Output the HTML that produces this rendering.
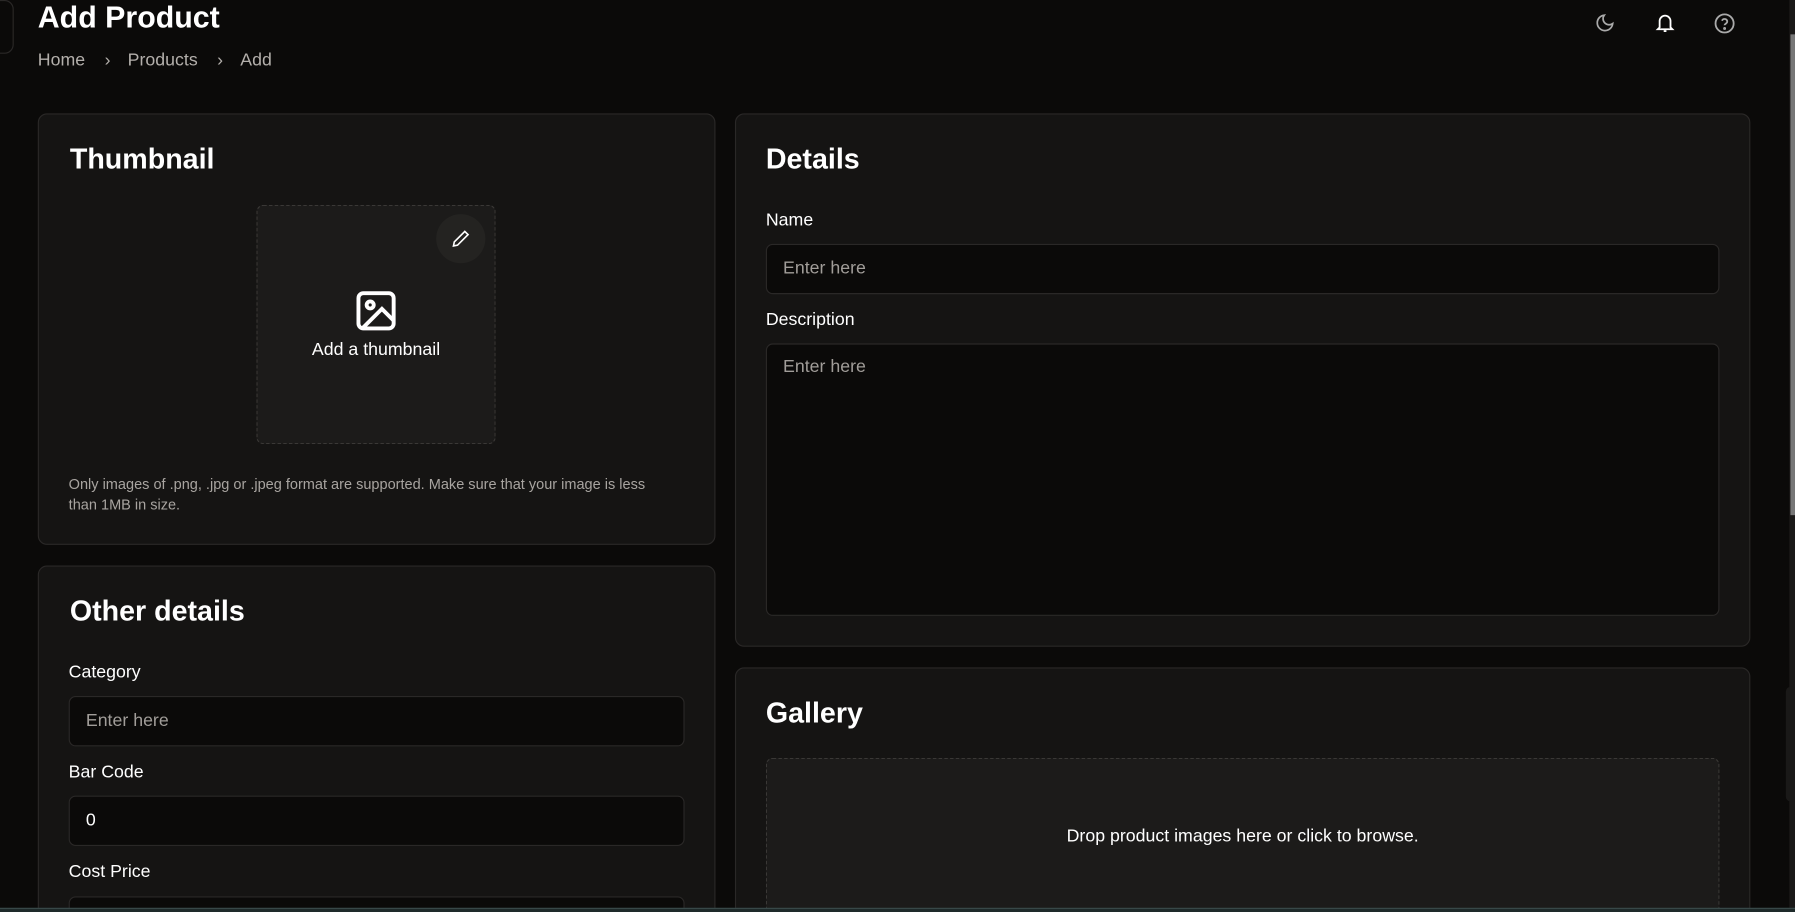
<!DOCTYPE html>
<html><head><meta charset="utf-8"><style>
html,body{margin:0;padding:0;width:1795px;height:912px;overflow:hidden;background:#0b0a09;}
#w{position:absolute;left:0;top:0;width:1568px;height:797px;overflow:hidden;transform:scale(1.14477);transform-origin:0 0;font-family:"Liberation Sans",sans-serif;color:#fff;background:#0b0a09;}
.a{position:absolute;}
.card{position:absolute;background:#151413;border:1px solid #2a2827;border-radius:8px;box-sizing:border-box;}
.h{position:absolute;font-weight:bold;font-size:25px;line-height:30px;}
.lbl{position:absolute;font-size:15.5px;line-height:18px;}
.inp{position:absolute;background:#0b0a09;border:1px solid #2a2827;border-radius:6px;box-sizing:border-box;color:#a19d99;font-size:15.5px;padding-left:14px;}
</style></head><body><div id="w">
<div class="a" style="left:-8px;top:0;width:18px;height:45px;border:1px solid #2a2827;border-radius:8px;"></div>
<div class="h" style="left:33px;top:0px;font-size:26.5px;">Add Product</div>
<div class="a" style="left:33px;top:44px;font-size:15.5px;color:#b3afab;line-height:18px;">Home<span style="margin:0 15px 0 17px">›</span>Products<span style="margin:0 15px 0 17px">›</span>Add</div>
<svg class="a" style="left:1393px;top:11px" width="18" height="18" viewBox="0 0 24 24" fill="none" stroke="#aaa" stroke-width="2"><path d="M21 12.8A9 9 0 1 1 11.2 3a7 7 0 0 0 9.8 9.8z"/></svg>
<svg class="a" style="left:1445px;top:10px" width="19" height="20" viewBox="0 0 24 24" fill="none" stroke="#fff" stroke-width="2"><path d="M6 17V10a6 6 0 0 1 12 0v7l2 2H4z"/><path d="M10.5 21h3"/></svg>
<svg class="a" style="left:1497px;top:11px" width="19" height="19" viewBox="0 0 24 24" fill="none" stroke="#aaa" stroke-width="2"><circle cx="12" cy="12" r="10"/><path d="M9.1 9a3 3 0 0 1 5.8 1c0 2-3 2.5-3 4"/><circle cx="12" cy="17.5" r=".6" fill="#aaa"/></svg>
<div class="a" style="left:1563px;top:0;width:5px;height:797px;background:#1a1918"></div>
<div class="a" style="left:1564px;top:30px;width:4px;height:420px;background:#777"></div>

<div class="card" style="left:33px;top:99px;width:592px;height:377px;"></div>
<div class="h" style="left:61px;top:124px;">Thumbnail</div>
<div class="a" style="left:224px;top:179px;width:209px;height:209px;background:#1c1b1a;border:1px dashed #3a3836;border-radius:6px;box-sizing:border-box;"></div>
<div class="a" style="left:381px;top:187px;width:43px;height:43px;border-radius:50%;background:#242321;"></div>
<svg class="a" style="left:394px;top:200px" width="17" height="17" viewBox="0 0 24 24" fill="none" stroke="#fff" stroke-width="2"><path d="M17 3l4 4L8 20l-5 1 1-5z"/></svg>
<svg class="a" style="left:308px;top:251px" width="41" height="41" viewBox="0 0 24 24" fill="none" stroke="#fff" stroke-width="2"><rect x="3" y="3" width="18" height="18" rx="2.5"/><circle cx="9" cy="9" r="1.8"/><path d="M5 21l10-10 6 6"/></svg>
<div class="a" style="left:224px;top:297px;width:209px;text-align:center;font-size:15.5px;">Add a thumbnail</div>
<div class="a" style="left:60px;top:415px;width:525px;font-size:12.7px;line-height:17.5px;color:#a8a4a0;">Only images of .png, .jpg or .jpeg format are supported. Make sure that your image is less than 1MB in size.</div>

<div class="card" style="left:33px;top:494px;width:592px;height:320px;"></div>
<div class="h" style="left:61px;top:519px;">Other details</div>
<div class="lbl" style="left:60px;top:579px;">Category</div>
<div class="inp" style="left:60px;top:608px;width:538px;height:44px;line-height:42px;">Enter here</div>
<div class="lbl" style="left:60px;top:666px;">Bar Code</div>
<div class="inp" style="left:60px;top:695px;width:538px;height:44px;line-height:42px;color:#fff">0</div>
<div class="lbl" style="left:60px;top:753px;">Cost Price</div>
<div class="inp" style="left:60px;top:783px;width:538px;height:44px;"></div>

<div class="card" style="left:642px;top:99px;width:887px;height:466px;"></div>
<div class="h" style="left:669px;top:124px;">Details</div>
<div class="lbl" style="left:669px;top:184px;">Name</div>
<div class="inp" style="left:669px;top:213px;width:833px;height:44px;line-height:42px;">Enter here</div>
<div class="lbl" style="left:669px;top:271px;">Description</div>
<div class="inp" style="left:669px;top:300px;width:833px;height:238px;padding-top:11px;line-height:18px;">Enter here</div>

<div class="card" style="left:642px;top:583px;width:887px;height:260px;"></div>
<div class="h" style="left:669px;top:608px;">Gallery</div>
<div class="a" style="left:669px;top:662px;width:833px;height:200px;background:#1c1b1a;border:1px dashed #3a3836;border-radius:6px;box-sizing:border-box;"></div>
<div class="a" style="left:669px;top:722px;width:833px;text-align:center;font-size:15.5px;">Drop product images here or click to browse.</div>
<div class="a" style="left:1560px;top:600px;width:10px;height:100px;background:#1a1918;border-radius:4px;"></div>
<div class="a" style="left:0;top:793px;width:1568px;height:4px;background:#1e2a2a;border-top:1px solid #3a4a4a;box-sizing:border-box;"></div>
</div></body></html>
